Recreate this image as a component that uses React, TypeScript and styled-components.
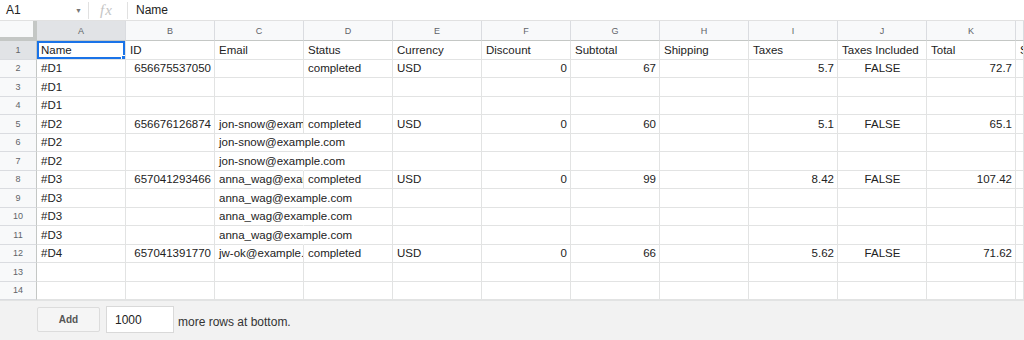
import React from 'react';
import styled, { createGlobalStyle } from 'styled-components';

const GlobalStyle = createGlobalStyle`
  html, body {
    margin: 0;
    padding: 0;
    background: #ffffff;
  }
  body {
    font-family: "Liberation Sans", Arial, sans-serif;
    width: 1024px;
    height: 340px;
    overflow: hidden;
  }
`;

const Page = styled.div`
  display: flex;
  flex-direction: column;
  width: 1024px;
  height: 340px;
  overflow: hidden;
`;

const FormulaBar = styled.div`
  display: flex;
  align-items: center;
  height: 21px;
  box-sizing: border-box;
  border-bottom: 1px solid #e1e1e1;
  font-size: 12px;
  color: #222;
`;

const NameBox = styled.div`
  display: flex;
  align-items: center;
  justify-content: space-between;
  width: 88px;
  box-sizing: border-box;
  padding: 0 6px 0 6px;
`;

const Caret = styled.span`
  font-size: 7px;
  color: #777;
`;

const Divider = styled.div`
  width: 1px;
  height: 17px;
  background: #e1e1e1;
`;

const Fx = styled.div`
  width: 38px;
  box-sizing: border-box;
  padding-left: 11px;
  font-family: "Liberation Serif", "Times New Roman", serif;
  font-style: italic;
  font-size: 15px;
  color: #c4c4c4;
  letter-spacing: 1px;
`;

const FormulaValue = styled.div`
  padding-left: 8px;
`;

const Grid = styled.div`
  display: grid;
  grid-template-columns: 37px repeat(11, 89px) 1fr;
  grid-template-rows: 20px repeat(14, 18.5px);
  background: #ffffff;
`;

const Corner = styled.div`
  box-sizing: border-box;
  background: #f8f9fa;
  border-right: 4px solid #c4c7c5;
  border-bottom: 4px solid #c4c7c5;
`;

const ColHead = styled.div<{ $active?: boolean }>`
  display: flex;
  align-items: center;
  justify-content: center;
  box-sizing: border-box;
  background: ${({ $active }) => ($active ? '#e1e3e6' : '#f8f9fa')};
  border-right: 1px solid #dadce0;
  border-bottom: 1px solid #c4c7c5;
  font-size: 9px;
  color: #5f6368;
`;

const RowHead = styled.div<{ $active?: boolean }>`
  display: flex;
  align-items: center;
  justify-content: center;
  box-sizing: border-box;
  background: ${({ $active }) => ($active ? '#e1e3e6' : '#f8f9fa')};
  border-right: 1px solid #c4c7c5;
  border-bottom: 1px solid #dadce0;
  font-size: 9px;
  color: #5f6368;
`;

const Cell = styled.div<{
  $align?: 'left' | 'right' | 'center';
  $spill?: boolean;
  $selected?: boolean;
}>`
  position: relative;
  display: flex;
  align-items: center;
  justify-content: ${({ $align }) =>
    $align === 'right' ? 'flex-end' : $align === 'center' ? 'center' : 'flex-start'};
  box-sizing: border-box;
  padding: 0 3px 0 4px;
  border-right: 1px solid ${({ $spill }) => ($spill ? 'transparent' : '#e2e3e3')};
  border-bottom: 1px solid #e2e3e3;
  font-size: 11.5px;
  color: #222;
  white-space: nowrap;
  overflow: ${({ $spill }) => ($spill ? 'visible' : 'hidden')};
  box-shadow: ${({ $selected }) => ($selected ? 'inset 0 0 0 2px #1a73e8' : 'none')};

  ${({ $selected }) =>
    $selected
      ? `&::after {
    content: '';
    position: absolute;
    right: -3px;
    bottom: -3px;
    width: 5px;
    height: 5px;
    background: #1a73e8;
    border: 1px solid #fff;
    z-index: 2;
  }`
      : ''}
`;

const Footer = styled.div`
  flex: 1;
  display: flex;
  align-items: center;
  gap: 6px;
  padding: 0 0 2px 37px;
  background: #f2f2f2;
  border-top: 1px solid #e2e3e3;
`;

const AddButton = styled.button`
  width: 63px;
  height: 25px;
  box-sizing: border-box;
  background: #f5f5f5;
  border: 1px solid #dcdcdc;
  border-radius: 2px;
  font-family: "Liberation Sans", Arial, sans-serif;
  font-size: 10px;
  font-weight: bold;
  color: #555;
  padding: 0;
`;

const CountInput = styled.input`
  width: 68px;
  height: 27px;
  box-sizing: border-box;
  border: 1px solid #d9d9d9;
  background: #fff;
  padding: 0 0 0 8px;
  font-family: "Liberation Sans", Arial, sans-serif;
  font-size: 12px;
  color: #222;
  outline: none;
`;

const FooterText = styled.span`
  margin-left: -2px;
  margin-top: 4px;
  font-size: 12px;
  color: #333;
`;

type Align = 'left' | 'right' | 'center';

const aligns: Align[] = [
  'left', 'right', 'left', 'left', 'left', 'right',
  'right', 'left', 'right', 'center', 'right', 'left',
];

const letters = ['A', 'B', 'C', 'D', 'E', 'F', 'G', 'H', 'I', 'J', 'K', ''];

const header = [
  'Name', 'ID', 'Email', 'Status', 'Currency', 'Discount', 'Subtotal',
  'Shipping', 'Taxes', 'Taxes Included', 'Total', 'Source',
];

const order = (
  name: string,
  id: string,
  email: string,
  sub: string,
  tax: string,
  total: string
) => [name, id, email, 'completed', 'USD', '0', sub, '', tax, 'FALSE', total, ''];

const only = (name: string, email = '') => [name, '', email, '', '', '', '', '', '', '', '', ''];

const rows: string[][] = [
  header,
  order('#D1', '656675537050', '', '67', '5.7', '72.7'),
  only('#D1'),
  only('#D1'),
  order('#D2', '656676126874', 'jon-snow@example.com', '60', '5.1', '65.1'),
  only('#D2', 'jon-snow@example.com'),
  only('#D2', 'jon-snow@example.com'),
  order('#D3', '657041293466', 'anna_wag@example.com', '99', '8.42', '107.42'),
  only('#D3', 'anna_wag@example.com'),
  only('#D3', 'anna_wag@example.com'),
  only('#D3', 'anna_wag@example.com'),
  order('#D4', '657041391770', 'jw-ok@example.com', '66', '5.62', '71.62'),
  only(''),
  only(''),
];

// text only spills into the next column when it is too long and that cell is empty
const spills = (row: string[], c: number) =>
  row[c].length > 14 && aligns[c] === 'left' && c + 1 < row.length && row[c + 1] === '';

export default function App() {
  return (
    <Page>
      <GlobalStyle />
      <FormulaBar>
        <NameBox>
          <span>A1</span>
          <Caret>▼</Caret>
        </NameBox>
        <Divider />
        <Fx>fx</Fx>
        <Divider />
        <FormulaValue>Name</FormulaValue>
      </FormulaBar>

      <Grid>
        <Corner />
        {letters.map((l, i) => (
          <ColHead key={'h' + i} $active={i === 0}>
            {l}
          </ColHead>
        ))}
        {rows.map((row, r) => (
          <React.Fragment key={'r' + r}>
            <RowHead $active={r === 0}>{r + 1}</RowHead>
            {row.map((v, c) => (
              <Cell
                key={c}
                $align={r === 0 ? 'left' : aligns[c]}
                $spill={r > 0 && spills(row, c)}
                $selected={r === 0 && c === 0}
              >
                {v}
              </Cell>
            ))}
          </React.Fragment>
        ))}
      </Grid>

      <Footer>
        <AddButton>Add</AddButton>
        <CountInput defaultValue="1000" />
        <FooterText>more rows at bottom.</FooterText>
      </Footer>
    </Page>
  );
}
